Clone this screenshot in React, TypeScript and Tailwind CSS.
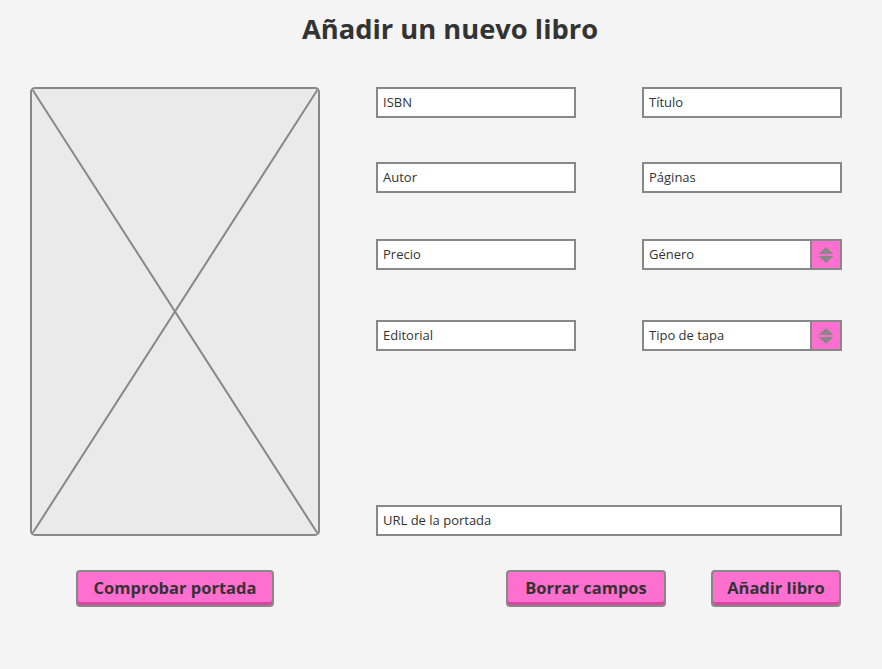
import React from "react";

const font = { fontFamily: '"Open Sans", "Noto Sans", sans-serif' };

function Field({ label, w = "w-[200px]" }: { label: string; w?: string }) {
  return (
    <div className={`${w} h-[31px] border-2 border-[#888888] bg-white flex items-center pl-[5px] text-[13px] text-[#333333]`}>
      {label}
    </div>
  );
}

function Select({ label }: { label: string }) {
  return (
    <div className="w-[200px] h-[31px] border-2 border-[#888888] bg-white flex items-stretch text-[13px] text-[#333333]">
      <div className="flex-1 flex items-center pl-[5px]">{label}</div>
      <div className="w-[30px] border-l-2 border-[#888888] bg-[#ff6fcf] flex items-center justify-center">
        <svg width="16" height="20" viewBox="0 0 16 20">
          <polygon points="8,2 15.5,9 0.5,9" fill="#888888" />
          <polygon points="0.5,11 15.5,11 8,18" fill="#888888" />
        </svg>
      </div>
    </div>
  );
}

function Button({ label, w }: { label: string; w: string }) {
  return (
    <div className={`${w} h-[37px] rounded-[4px] border-2 border-[#888888] bg-[#ff6fcf] shadow-[inset_0_-3px_0_#d9449f] flex items-center justify-center text-[16.5px] font-bold text-[#333333]`}>
      {label}
    </div>
  );
}

export default function App() {
  return (
    <div className="w-[882px] h-[669px] bg-[#f4f4f4] overflow-hidden" style={font}>
      <div className="h-[58px] flex items-center justify-center pl-[18px] text-[27.3px] font-bold text-[#333333]">
        Añadir un nuevo libro
      </div>
      <div className="flex pl-[30px] pt-[29px]">
        <div className="w-[290px] h-[449px] rounded-[5px] border-2 border-[#888888] bg-[#eaeaea] overflow-hidden">
          <svg width="286" height="445" viewBox="0 0 286 445" className="block">
            <line x1="0" y1="0" x2="286" y2="445" stroke="#888888" strokeWidth="2" />
            <line x1="286" y1="0" x2="0" y2="445" stroke="#888888" strokeWidth="2" />
          </svg>
        </div>
        <div className="ml-[56px] flex flex-col">
          <div className="flex gap-[66px]">
            <Field label="ISBN" />
            <Field label="Título" />
          </div>
          <div className="flex gap-[66px] mt-[44px]">
            <Field label="Autor" />
            <Field label="Páginas" />
          </div>
          <div className="flex gap-[66px] mt-[46px]">
            <Field label="Precio" />
            <Select label="Género" />
          </div>
          <div className="flex gap-[66px] mt-[50px]">
            <Field label="Editorial" />
            <Select label="Tipo de tapa" />
          </div>
          <div className="mt-[154px]">
            <Field label="URL de la portada" w="w-[466px]" />
          </div>
        </div>
      </div>
      <div className="flex mt-[34px]">
        <div className="ml-[76px]">
          <Button label="Comprobar portada" w="w-[198px]" />
        </div>
        <div className="ml-[232px]">
          <Button label="Borrar campos" w="w-[160px]" />
        </div>
        <div className="ml-[45px]">
          <Button label="Añadir libro" w="w-[130px]" />
        </div>
      </div>
    </div>
  );
}
